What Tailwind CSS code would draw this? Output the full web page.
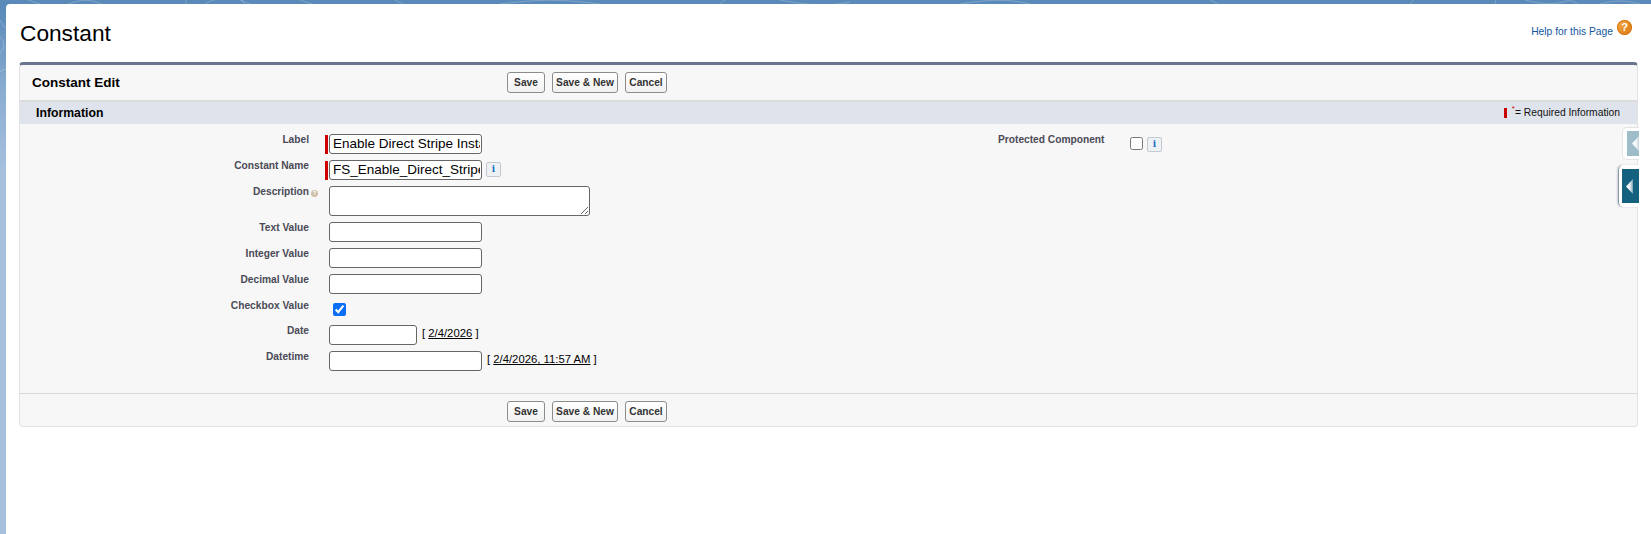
<!DOCTYPE html>
<html lang="en">
<head>
  <meta charset="UTF-8">
  <title>Constant Edit</title>
  <script src="https://cdn.jsdelivr.net/npm/@tailwindcss/browser@4"></script>
</head>
<body class="relative h-[534px] overflow-hidden bg-gradient-to-b from-[#5a8ab9] from-[10px] via-[#8aacd1] via-[90px] to-[#a6c0de] to-[170px] font-['Liberation_Sans',Arial,sans-serif]">

  <!-- faint swirls of the page background -->
  <svg class="absolute left-0 top-0" width="1651" height="90" fill="none" stroke="#fff" stroke-opacity=".22">
    <circle cx="-6" cy="45" r="10"/>
    <path d="M0 72c3-3 5-3 6-2M0 20c3 6 5 8 6 8"/>
    <path d="M28 0l12 4M68 4c14-5 22-5 34 0M185 0c3 2 2 3 0 4M205 4c6-4 8-4 10-4M240 0l10 4M245 4c-3-2-3-3-2-4M300 0l12 4M395 0l8 4"/>
    <path d="M500 4c40-5 60-5 100 0M720 4c4-3 5-4 6-4M780 0c30 6 50 6 70 2M960 4c30-5 50-5 70 0M1210 0l8 4"/>
    <path d="M1410 4c2-2 3-3 3-4M1495 4l1-4M1525 0c20 5 30 5 45 0M1570 0l8 4M1600 4c15-4 25-4 40 0"/>
  </svg>

  <div class="relative ml-[6px] pt-[4px] h-full">
    <div class="h-full bg-white rounded-tl-[4px] pl-[13px] pr-[13px]">

      <!-- title row -->
      <div class="flex justify-between h-[58px]">
        <h1 class="pt-[13px] pl-[1px] text-[22.7px] leading-[32px] text-black">Constant</h1>
        <div class="flex items-start pt-[16px] pr-[6px]">
          <a class="text-[10.3px] leading-[24px] text-[#15589e]">Help for this Page</a>
          <span class="ml-[4px] w-[15px] h-[15px] rounded-full bg-gradient-to-br from-[#f6ad42] to-[#d9740f] shadow-[inset_0_0_0_1px_#d67a1a] text-white text-[11px] leading-[15px] font-bold text-center">?</span>
        </div>
      </div>

      <!-- edit panel -->
      <div class="relative h-[365px] flex flex-col bg-[#f7f7f7] border border-[#e3e3e3] border-t-[3px] border-t-[#6a7690] rounded-[4px]">
        <div class="flex items-center h-[35px] shrink-0">
          <h2 class="w-[487px] pl-[12px] pt-[2px] text-[13.5px] font-bold text-black">Constant Edit</h2>
          <div class="flex gap-[7px] text-[10.2px] font-bold text-[#333]">
            <button class="w-[38px] h-[21px] bg-gradient-to-b from-white to-[#f1f1f1] border border-[#8c8c8c] rounded-[3px]">Save</button>
            <button class="w-[66px] h-[21px] bg-gradient-to-b from-white to-[#f1f1f1] border border-[#8c8c8c] rounded-[3px]">Save &amp; New</button>
            <button class="w-[42px] h-[21px] bg-gradient-to-b from-white to-[#f1f1f1] border border-[#8c8c8c] rounded-[3px]">Cancel</button>
          </div>
        </div>

        <div class="shrink-0 mt-[2px] h-[22px] bg-[#dfe3ec] flex items-center justify-between pl-[16px] pr-[17px] shadow-[0_-2px_0_#dcdcdc]">
          <h3 class="text-[12.25px] font-bold text-black">Information</h3>
          <div class="flex items-center text-[10.3px] text-[#111]">
            <span class="w-[3px] h-[10px] bg-[#c00] mr-[5px]"></span>
            <span class="text-[#c00] text-[8px] leading-none self-start">*</span><span>= Required Information</span>
          </div>
        </div>

        <!-- fields -->
        <div class="flex flex-1 pt-[10px] text-[10.2px] font-bold text-[#4a4a56]">
          <div class="w-[978px] flex flex-col gap-[6px]">
            <div class="flex h-[20px]">
              <label class="w-[289px] text-right leading-[12px]">Label</label>
              <div class="ml-[16px] w-[4px] h-[19px] mt-[1px] bg-[#c00] border-r border-r-[#f7f7f7]"></div>
              <input value="Enable Direct Stripe Instance" class="w-[153px] h-[20px] pl-[3px] pr-[1px] bg-white border border-[#666] rounded-[3px] text-[13.5px] font-normal text-black">
            </div>
            <div class="flex h-[20px]">
              <label class="w-[289px] text-right leading-[12px]">Constant Name</label>
              <div class="ml-[16px] w-[4px] h-[19px] mt-[1px] bg-[#c00] border-r border-r-[#f7f7f7]"></div>
              <input value="FS_Enable_Direct_Stripe_Instance" class="w-[153px] h-[20px] pl-[3px] pr-[1px] bg-white border border-[#666] rounded-[3px] text-[13.5px] font-normal text-black">
              <button class="ml-[4px] mt-[2px] w-[15px] h-[15px] bg-[#eef1f4] border border-[#c4c9cf] rounded-[2px] font-['DejaVu_Serif',serif] text-[9px] font-bold leading-[13px] text-[#1a6fc4]">i</button>
            </div>
            <div class="flex h-[30px]">
              <label class="w-[289px] text-right leading-[12px]">Description<span class="inline-block ml-[2px] mr-[-9px] w-[7px] h-[7px] rounded-full bg-[#cdbfa9] text-white text-[6px] leading-[7px] text-center">?</span></label>
              <textarea class="ml-[20px] w-[261px] h-[30px] bg-white border border-[#666] rounded-[3px]"></textarea>
            </div>
            <div class="flex h-[20px]">
              <label class="w-[289px] text-right leading-[12px]">Text Value</label>
              <input class="ml-[20px] w-[153px] h-[20px] bg-white border border-[#666] rounded-[3px]">
            </div>
            <div class="flex h-[20px]">
              <label class="w-[289px] text-right leading-[12px]">Integer Value</label>
              <input class="ml-[20px] w-[153px] h-[20px] bg-white border border-[#666] rounded-[3px]">
            </div>
            <div class="flex h-[20px]">
              <label class="w-[289px] text-right leading-[12px]">Decimal Value</label>
              <input class="ml-[20px] w-[153px] h-[20px] bg-white border border-[#666] rounded-[3px]">
            </div>
            <div class="flex h-[19px]">
              <label class="w-[289px] text-right leading-[12px]">Checkbox Value</label>
              <input type="checkbox" checked class="ml-[24px] mt-[3px] w-[13px] h-[13px] accent-[#0b6ef5]">
            </div>
            <div class="flex h-[20px]">
              <label class="w-[289px] text-right leading-[12px]">Date</label>
              <input class="ml-[20px] w-[88px] h-[20px] bg-white border border-[#666] rounded-[3px]">
              <span class="ml-[5px] pt-[1px] text-[11.3px] leading-[14px] font-normal text-black">[ <a class="underline">2/4/2026</a> ]</span>
            </div>
            <div class="flex h-[20px]">
              <label class="w-[289px] text-right leading-[12px]">Datetime</label>
              <input class="ml-[20px] w-[153px] h-[20px] bg-white border border-[#666] rounded-[3px]">
              <span class="ml-[5px] pt-[1px] text-[11.3px] leading-[14px] font-normal text-black">[ <a class="underline">2/4/2026, 11:57 AM</a> ]</span>
            </div>
          </div>
          <div class="flex items-start">
            <label class="w-[108px] leading-[12px]">Protected Component</label>
            <input type="checkbox" class="ml-[24px] mt-[3px] w-[13px] h-[13px]">
            <button class="ml-[4px] mt-[3px] w-[15px] h-[15px] bg-[#eef1f4] border border-[#c4c9cf] rounded-[2px] font-['DejaVu_Serif',serif] text-[9px] font-bold leading-[13px] text-[#1a6fc4]">i</button>
          </div>
        </div>

        <div class="flex items-center h-[33px] pt-[3px] shrink-0 border-t border-[#d8d8d8]">
          <div class="w-[487px]"></div>
          <div class="flex gap-[7px] text-[10.2px] font-bold text-[#333]">
            <button class="w-[38px] h-[21px] bg-gradient-to-b from-white to-[#f1f1f1] border border-[#8c8c8c] rounded-[3px]">Save</button>
            <button class="w-[66px] h-[21px] bg-gradient-to-b from-white to-[#f1f1f1] border border-[#8c8c8c] rounded-[3px]">Save &amp; New</button>
            <button class="w-[42px] h-[21px] bg-gradient-to-b from-white to-[#f1f1f1] border border-[#8c8c8c] rounded-[3px]">Cancel</button>
          </div>
        </div>

        <!-- sidebar tabs hanging over the panel edge -->
        <div class="absolute right-[-2px] top-[62px] w-[17px] h-[33px] bg-white border border-r-0 border-[#e4e4e4] rounded-l-[5px] pl-[4px] py-[3px]">
          <div class="h-full bg-[#9fbcc9] flex items-center justify-end">
            <svg width="7" height="15" viewBox="0 0 7 15"><defs><linearGradient id="fadeA" x1="0" x2="1" y1="0" y2="0"><stop offset="0" stop-color="#fff"/><stop offset=".6" stop-color="#f2f6f8"/><stop offset="1" stop-color="#c3d5dd"/></linearGradient></defs><path d="M7 0v15L0 7.5z" fill="url(#fadeA)"/></svg>
          </div>
        </div>
        <div class="absolute right-[-2px] top-[100px] w-[21px] h-[42px] bg-white border-l border-[#8d9aa6] rounded-l-[5px] shadow-[-1px_0_2px_#c9ced3] pl-[3px] py-[4px]">
          <div class="h-full bg-[#14617f] flex items-center pl-[4px]">
            <svg width="7" height="15" viewBox="0 0 7 15"><defs><linearGradient id="fadeB" x1="0" x2="1" y1="0" y2="0"><stop offset="0" stop-color="#fff"/><stop offset=".6" stop-color="#e4ecf0"/><stop offset="1" stop-color="#6f9fb2"/></linearGradient></defs><path d="M7 0v15L0 7.5z" fill="url(#fadeB)"/></svg>
          </div>
        </div>
      </div>

    </div>
  </div>

</body>
</html>
